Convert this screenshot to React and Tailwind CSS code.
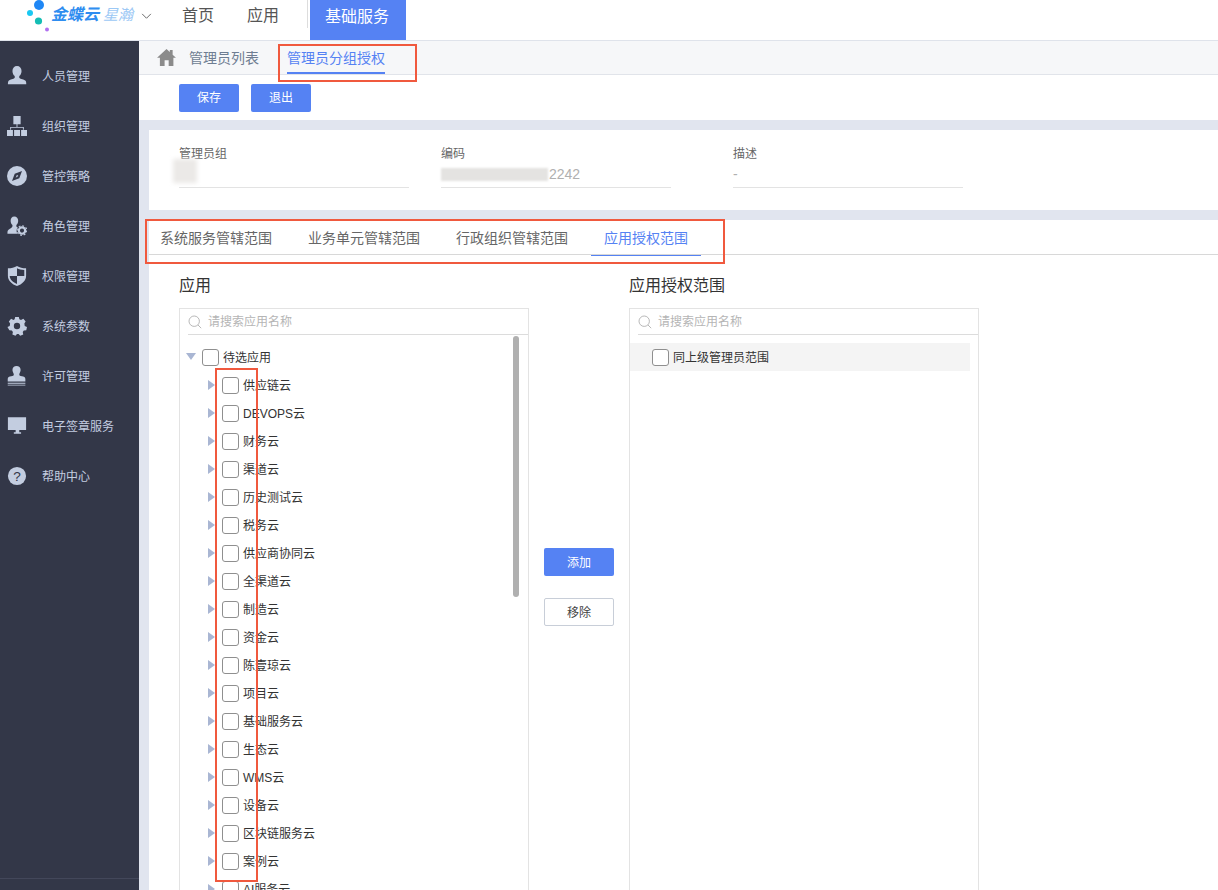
import React from 'react';

const cjk = { fontFamily: '"Liberation Sans", "Noto Sans CJK SC", sans-serif' };

const ic = 'w-[20px] h-[20px] text-[#c3cde0]';
const icons = {
  user: <svg viewBox="0 0 22 22" className={ic} fill="currentColor"><path d="M11 0c3 0 5 2.200 5 5.500 0 2.500-1 4.500-2.500 5.600v1.900c0 1 4 1.500 6.500 3 1 .6 1.200 2.300 1.200 4H1c0-1.700.2-3.400 1.200-4 2.500-1.500 6.300-2 6.300-3v-1.900C7 10 6 8 6 5.500 6 2.200 8 0 11 0z" /></svg>,
  org: <svg viewBox="0 0 22 22" className={ic} fill="currentColor"><path d="M7 0h8v9h-8zM10.500 9h1v3h7v3h-1v-2h-13v2h-1v-3h7zM0 15.500h6.500V22H0zM7.800 15.500h6.500V22H7.800zM15.500 15.500H22V22h-6.500z" /></svg>,
  compass: <svg viewBox="0 0 22 22" className={ic}><circle cx="11" cy="11" r="11" fill="currentColor" /><path d="M16.500 5.500l-3 8-8 3 3-8z" fill="#333748" /><path d="M11 9.500l1.500 1.500-3 2z" fill="#c3cde0" /></svg>,
  role: <svg viewBox="0 0 22 22" className={ic} fill="currentColor"><path d="M8 .5c2.600 0 4.300 2 4.300 4.800 0 2-.8 3.700-2 4.600v1.300c0 .5.700.9 1.700 1.300a6 6 0 0 0-.5 7H.5c0-2.200 0-3.800 1.200-4.500 2-1.300 4.300-2.500 4.300-3.800V9.900C4.700 9 4 7.300 4 5.300 4 2.500 5.500.5 8 .5z" /><circle cx="16.500" cy="16" r="3.500" fill="none" stroke="currentColor" strokeWidth="2.400" /><circle cx="16.500" cy="16" r="5.300" fill="none" stroke="currentColor" strokeWidth="1.200" strokeDasharray="2 2.100" /></svg>,
  shield: <svg viewBox="0 0 22 22" className={ic}><path d="M11 0c3 1.700 6 2.500 10 2.500v8.500c0 5-4.500 9.200-10 11C5.500 20.200 1 16 1 11V2.500C5 2.500 8 1.700 11 0z" fill="currentColor" /><path d="M11 2.500c2.300 1.200 4.600 1.800 8 2v6.500h-8zM11 11v8.800C6.800 18 3 15 3 11z" fill="#333748" /></svg>,
  gear: <svg viewBox="0 0 22 22" className={ic} fill="currentColor"><path fillRule="evenodd" d="M9 1h4l.6 2.700 1.800.8L18 3l2.500 3-1.400 2.300.4 2.700 2.500 1-.8 3.800-2.700.1-1.200 1.700.6 2.700-3.400 1.500-1.700-2.100h-1.800l-1.700 2.100-3.400-1.500.6-2.700-1.200-1.700-2.700-.1L.5 12l2.500-1 .4-2.700L2 6l2.500-3 2.600 1.500 1.300-.8zM11 7.500a3.500 3.500 0 1 0 0 7 3.500 3.500 0 0 0 0-7z" /></svg>,
  stamp: <svg viewBox="0 0 22 22" className={ic} fill="currentColor"><path d="M10.500 0c2.600 0 4.500 1.800 4.500 4.300 0 2.200-1.500 3.300-1.500 5 0 1.200 1 1.700 3 2 2 .3 3.700 1 3.700 3v2.700H.8v-2.700c0-2 1.700-2.700 3.700-3 2-.3 3-.8 3-2 0-1.700-1.500-2.800-1.500-5C6 1.800 7.900 0 10.500 0zM.8 18.500h19.400v1H.8zM.8 20.500h19.400v1H.8z" /></svg>,
  monitor: <svg viewBox="0 0 22 22" className={ic} fill="currentColor"><path d="M1 1.500h20v14h-7.500V18h2v1.500h-8V18h2v-2.500H1z" /></svg>,
  help: <svg viewBox="0 0 22 22" className={ic}><circle cx="11" cy="11" r="10" fill="currentColor" /><text x="11" y="16.500" textAnchor="middle" fontSize="15" fill="#333748" fontFamily="Liberation Sans">?</text></svg>,
};

const navItems = [
  ['user', '人员管理'], ['org', '组织管理'], ['compass', '管控策略'], ['role', '角色管理'], ['shield', '权限管理'],
  ['gear', '系统参数'], ['stamp', '许可管理'], ['monitor', '电子签章服务'], ['help', '帮助中心'],
];

const apps = ['供应链云', 'DEVOPS云', '财务云', '渠道云', '历史测试云', '税务云', '供应商协同云', '全渠道云', '制造云', '资金云', '陈壹琼云', '项目云', '基础服务云', '生态云', 'WMS云', '设备云', '区块链服务云', '案例云', 'AI服务云'];

function Check() {
  return <span className="block w-[17px] h-[17px] shrink-0 rounded-[3px] border border-[#8f8f8f] bg-white" />;
}

function Search() {
  return (
    <div className="flex items-center h-[26px] ml-[8px] border-b border-[#dcdcdc] text-[12px] text-[#b5b5b5]">
      <svg viewBox="0 0 14 14" className="w-[14px] h-[14px] text-[#b8b8b8]" fill="none" stroke="currentColor" strokeWidth="1"><circle cx="6.200" cy="6.200" r="5.200" /><path d="M10 10l3.200 3.200" /></svg>
      <span className="ml-[6px]">请搜索应用名称</span>
    </div>
  );
}

function Field({ label, value, className, children }) {
  return (
    <div className={className}>
      <div className="h-[16px] leading-[18px] text-[12px] text-[#666]">{label}</div>
      <div className="relative mt-[4px] h-[23px] pb-[3px] leading-[18px] text-[14px] text-[#b0b0b0] border-b border-[#e3e3e3]">
        {value}{children}
      </div>
    </div>
  );
}

export default function App() {
  return (
    <div style={cjk} className="relative w-[1218px] h-[890px] overflow-hidden bg-white">
      {/* top bar */}
      <header className="flex h-[41px] bg-white border-b border-[#dfe3eb]">
        <div className="flex items-center w-[182px] pl-[27px]">
          <svg viewBox="0 0 24 33" className="w-[24px] h-[33px] -mt-[8px] shrink-0">
            <circle cx="12" cy="5" r="5" fill="#1f87f5" />
            <circle cx="3" cy="13" r="3" fill="#19c8f2" />
            <circle cx="11.500" cy="21" r="3.600" fill="#14bdb4" />
            <circle cx="20" cy="29.500" r="2" fill="#b070f0" />
          </svg>
          <span className="-mt-[10px] text-[16px] leading-[20px] font-bold italic text-[#2e8df0] whitespace-nowrap">金蝶云</span>
          <span className="-mt-[10px] ml-[4px] text-[15px] leading-[20px] italic text-[#9cc8f5] whitespace-nowrap">星瀚</span>
          <svg viewBox="0 0 12 8" className="-mt-[8px] ml-[8px] w-[11px] h-[7px] text-[#666] shrink-0" fill="none" stroke="currentColor" strokeWidth="1.100"><path d="M1 1l5 5 5-5" /></svg>
        </div>
        <div className="w-[65px] leading-[32px] text-[16px] text-[#555]">首页</div>
        <div className="w-[61px] leading-[32px] text-[16px] text-[#555] border-r border-[#ddd] h-[28px]">应用</div>
        <div className="ml-[2px] w-[96px] h-[40px] pr-[2px] leading-[33px] bg-[#5582f3] text-white text-[16px] text-center">基础服务</div>
      </header>

      <div className="flex h-[849px]">
        {/* sidebar */}
        <aside className="flex flex-col w-[139px] shrink-0 bg-[#333748] pt-[10px]">
          {navItems.map(([k, t]) => (
            <div key={t} className="flex items-center h-[50px] pl-[7px] text-[12px] text-[#c3cde0]">
              <span className="w-[35px] flex items-center">{icons[k]}</span>
              <span className="pt-[2px]">{t}</span>
            </div>
          ))}
          <div className="mt-auto mb-[11px] border-t border-[#43475a]" />
        </aside>

        {/* main */}
        <main className="flex flex-col flex-1 min-w-0 bg-[#e1e5ef]">
          {/* breadcrumb tabs */}
          <div className="flex h-[34px] bg-[#f6f7f9] border-b border-[#e1e4ea] pl-[18px] text-[14px]">
            <svg viewBox="0 0 20 18" className="w-[19px] h-[17px] mt-[8px] text-[#8b8b8b]" fill="currentColor"><path d="M10 0l3.500 3.200V1h3v5l3.500 3.200h-2.700V18h-5v-6H8v6H3V9.200H0z" /></svg>
            <span className="ml-[13px] leading-[35px] text-[#6e7d92]">管理员列表</span>
            <div className="relative ml-[28px] h-[33px] leading-[35px] text-[#5582f3]">
              管理员分组授权
              <span className="absolute left-0 right-0 bottom-0 h-[2px] bg-[#5582f3]" />
            </div>
          </div>
          {/* toolbar */}
          <div className="flex gap-[12px] h-[45px] bg-white pl-[40px] pt-[9px]">
            <button className="w-[60px] h-[28px] rounded-[2px] bg-[#5582f3] text-white text-[12px]">保存</button>
            <button className="w-[60px] h-[28px] rounded-[2px] bg-[#5582f3] text-white text-[12px]">退出</button>
          </div>
          {/* info card */}
          <div className="flex mt-[10px] ml-[10px] h-[80px] bg-white pl-[30px] pt-[15px]">
            <Field label="管理员组" className="w-[230px]" value="">
              <span className="absolute left-[-6px] top-[-6px] w-[24px] h-[24px] bg-[#ebe9e7] blur-[2px]" />
            </Field>
            <Field label="编码" className="w-[230px] ml-[32px]" value="">
              <span className="absolute left-0 top-[3px] w-[107px] h-[13px] bg-[#e4e3e1] blur-[1px]" />
              <span className="ml-[108px]">2242</span>
            </Field>
            <Field label="描述" className="w-[230px] ml-[62px]" value="-" />
          </div>
          {/* lower panel */}
          <div className="flex flex-col flex-1 min-h-0 mt-[10px] ml-[10px] bg-white">
            <div className="flex h-[35px] border-b border-[#d8d8d8] pl-[11px] text-[14px] text-[#666] leading-[37px]">
              <span className="w-[148px]">系统服务管辖范围</span>
              <span className="w-[148px]">业务单元管辖范围</span>
              <span className="w-[135px]">行政组织管辖范围</span>
              <span className="relative w-[110px] h-[35px] text-center text-[#5582f3]">
                应用授权范围
                <span className="absolute left-0 right-0 bottom-[-1px] h-[1px] bg-[#5582f3]" />
              </span>
            </div>
            <div className="flex flex-1 min-h-0 pl-[30px]">
              {/* left column */}
              <div className="w-[350px] shrink-0">
                <div className="h-[53px] pt-[19px] leading-[24px] text-[16px] text-[#333]">应用</div>
                <div className="h-[600px] border border-[#e3e3e3] overflow-hidden">
                  <Search />
                  <div className="relative pt-[8px] text-[12px] text-[#333]">
                    <span className="absolute left-[333px] top-[1px] w-[6px] h-[261px] rounded-[3px] bg-[#b0b0b0]" />
                    <div className="flex items-center h-[28px] pl-[6px]">
                      <svg viewBox="0 0 10 8" className="w-[10px] h-[8px] text-[#a9b6d3]" fill="currentColor"><path d="M0 0h10L5 7z" /></svg>
                      <span className="ml-[6px]"><Check /></span>
                      <span className="ml-[4px] pt-[2px]">待选应用</span>
                    </div>
                    {apps.map((a) => (
                      <div key={a} className="flex items-center h-[28px] pl-[28px]">
                        <svg viewBox="0 0 8 10" className="w-[8px] h-[10px] text-[#a9b6d3]" fill="currentColor"><path d="M0 0l7 5-7 5z" /></svg>
                        <span className="ml-[6px]"><Check /></span>
                        <span className="ml-[4px] pt-[2px]">{a}</span>
                      </div>
                    ))}
                  </div>
                </div>
              </div>
              {/* move buttons */}
              <div className="flex flex-col w-[100px] shrink-0 pl-[15px] pt-[293px]">
                <button className="w-[70px] h-[28px] pt-[2px] rounded-[2px] bg-[#5582f3] text-white text-[12px]">添加</button>
                <button className="w-[70px] h-[28px] pt-[2px] mt-[22px] rounded-[2px] bg-white border border-[#c8ced8] text-[#444] text-[12px]">移除</button>
              </div>
              {/* right column */}
              <div className="w-[350px] shrink-0">
                <div className="h-[53px] pt-[19px] leading-[24px] text-[16px] text-[#333]">应用授权范围</div>
                <div className="h-[600px] border border-[#e3e3e3] overflow-hidden">
                  <Search />
                  <div className="pt-[8px] text-[12px] text-[#333]">
                    <div className="flex items-center h-[28px] w-[340px] pl-[22px] bg-[#f4f4f4]">
                      <Check />
                      <span className="ml-[4px] pt-[2px]">同上级管理员范围</span>
                    </div>
                  </div>
                </div>
              </div>
            </div>
          </div>
        </main>
      </div>

      {/* red annotation boxes drawn over the screenshot */}
      <div className="absolute left-[278px] top-[44px] w-[139px] h-[38px] border-2 border-[#f0593e] pointer-events-none" />
      <div className="absolute left-[145px] top-[219px] w-[580px] h-[45px] border-2 border-[#f0593e] pointer-events-none" />
      <div className="absolute left-[215px] top-[368px] w-[43px] h-[514px] border-2 border-[#f0593e] pointer-events-none" />
    </div>
  );
}
